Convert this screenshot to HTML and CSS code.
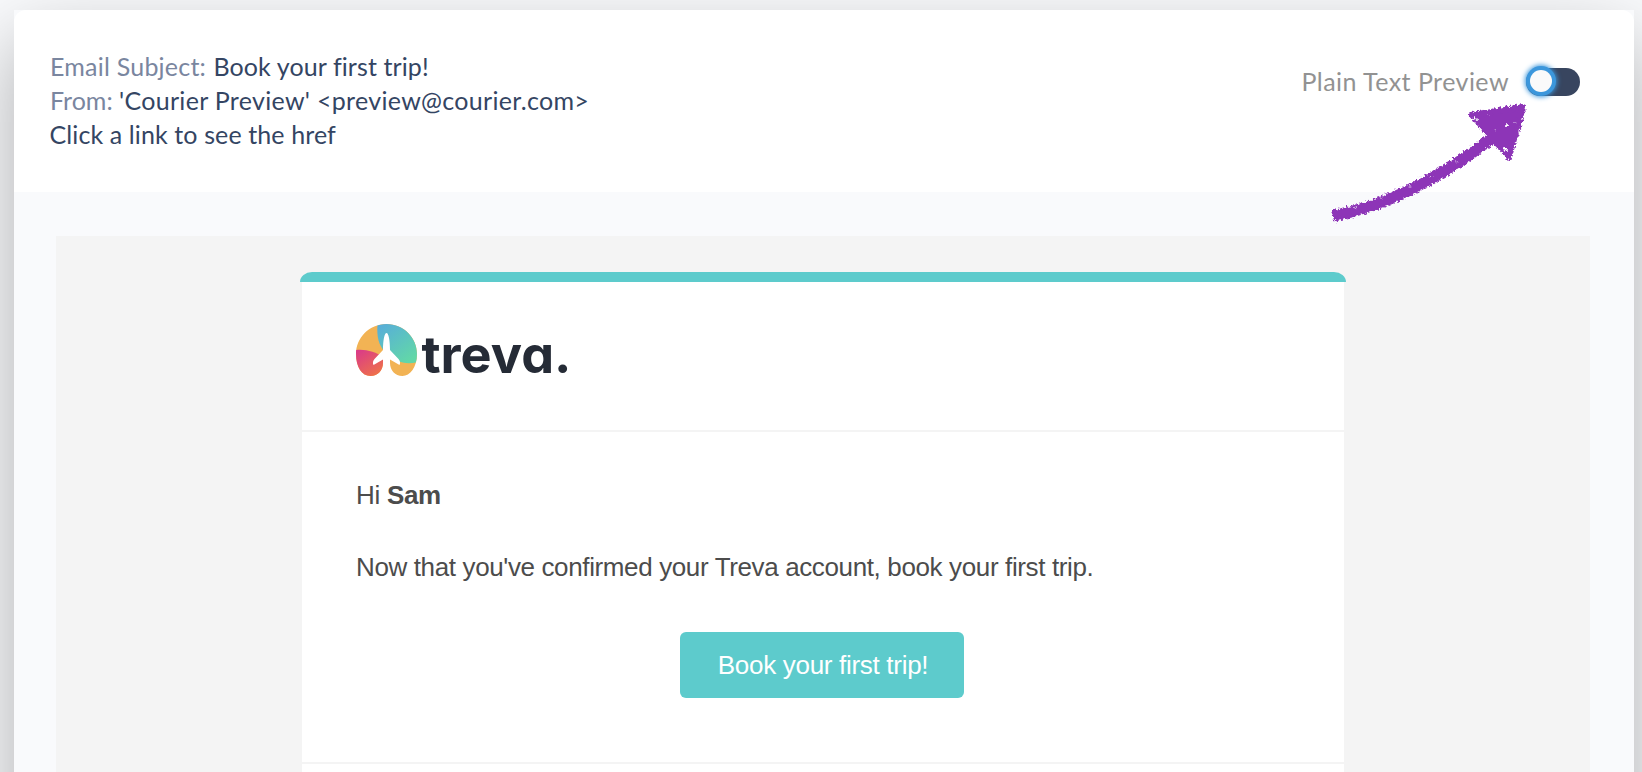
FILE: index.html
```html
<!DOCTYPE html>
<html lang="en">
<head>
<meta charset="utf-8">
<title>Email Preview</title>
<link rel="stylesheet" href="styles.css">
</head>
<body>
<main class="preview">
  <header class="preview-header">
    <div class="meta">
      <div><span class="label subject-label">Email Subject:</span> <span class="subject">Book your first trip!</span></div>
      <div><span class="label">From:</span> <span class="sender">'Courier Preview' &lt;preview@courier.com&gt;</span></div>
      <div class="hint">Click a link to see the href</div>
    </div>
    <div class="toggle">
      <span class="toggle-label">Plain Text Preview</span>
      <span class="track"><span class="thumb"></span></span>
    </div>
    <svg class="arrow" viewBox="0 0 220 150" width="220" height="150">
      <defs>
        <filter id="chalk" x="0" y="0" width="220" height="150" filterUnits="userSpaceOnUse">
          <feTurbulence type="fractalNoise" baseFrequency="0.42" numOctaves="3" seed="8" result="n"/>
          <feDisplacementMap in="SourceGraphic" in2="n" scale="6" xChannelSelector="R" yChannelSelector="G"/>
        </filter>
      </defs>
      <g filter="url(#chalk)">
        <path class="arrow-shaft" d="M13 126C62 117 116 91 171 49"/>
        <path class="arrow-head" d="M152 25 203 17 189 67Z"/>
        <path class="arrow-gap" d="M154 28l3 2M187 35l1 1M184 59l3 1"/>
        <path class="arrow-grain" d="M34 118l2-1M60 108l2 0M89 97l1 0M111 87l1-1M136 72l1 0M175 40l1 0M194 32l1 0M168 24l1 1"/>
      </g>
    </svg>
  </header>
  <div class="canvas">
    <article class="email">
      <div class="accent"></div>
      <div class="sheet">
        <div class="brand">
          <svg viewBox="0 0 220 80" width="220" height="80" role="img" aria-label="treva.">
            <defs>
              <linearGradient id="sea" x1="0" y1="0" x2=".7" y2="1"><stop offset="0" stop-color="#56a9df"/><stop offset="1" stop-color="#62d7a8"/></linearGradient>
              <linearGradient id="sun" x1="0" y1="0" x2=".6" y2="1"><stop offset="0" stop-color="#d9388b"/><stop offset="1" stop-color="#ef7348"/></linearGradient>
              <clipPath id="blob"><path d="M30.5 4C13 4 0 18 0 34C0 47 6 56 14.500 56C22 56 27 50 27 43L27 30H34V43C34 50 39 56 46.500 56C54 56 61 47 61 34C61 18 48 4 30.500 4Z"/></clipPath>
            </defs>
            <g clip-path="url(#blob)">
              <path fill="#f2b354" d="M0 0H62V60H0Z"/>
              <path fill="url(#sea)" d="M22 0C20 15 22 26 31 34C40 42 49 45 62 42V0Z"/>
              <path fill="url(#sun)" d="M0 30C10 29 20 32 27 37V60H0Z"/>
            </g>
            <path fill="#fff" d="M30.500 13C28.500 13 27 20 27 30L18.500 39Q16 42 17.500 45L27 39.500V59H34V39.500L43.500 45Q45 42 42.500 39L34 30C34 20 32.500 13 30.500 13Z"/>
            <text class="wordmark" x="65.500" y="53" textLength="150" lengthAdjust="spacingAndGlyphs">treva.</text>
          </svg>
        </div>
        <div class="content">
          <p class="greeting">Hi <strong>Sam</strong></p>
          <p class="message">Now that you've confirmed your Treva account, book your first trip.</p>
          <a class="button"><span>Book your first trip!</span></a>
        </div>
        <div class="footer"></div>
      </div>
    </article>
  </div>
</main>
</body>
</html>
```
FILE: styles.css
```css
* { box-sizing: border-box; }
body {
  margin: 0;
  padding: 10px 8px 0 14px;
  height: 772px;
  overflow: hidden;
  background: #f9fafc;
  font-family: Lato, "Liberation Sans", sans-serif;
}
.preview {
  height: 1100px;
  background: #f9fafc;
  box-shadow: 0 30px 72px rgba(0, 0, 0, .3);
}
.preview-header {
  position: relative;
  display: flex;
  justify-content: space-between;
  height: 182px;
  padding: 39px 54px 0 36px;
  border-radius: 12px 12px 0 0;
  background: #fff;
}
.meta { font-size: 25px; line-height: 34px; color: #344563; white-space: nowrap; }
.label { color: #7a869f; }
.subject-label { margin-right: 1px; letter-spacing: .22px; }
.subject { letter-spacing: .1px; }
.sender { letter-spacing: .31px; }
.hint { margin-left: -.5px; letter-spacing: .11px; }
.toggle { display: flex; align-items: center; height: 28px; margin-top: 19px; }
.toggle-label { position: relative; top: -1.5px; margin-right: 17px; font-size: 25px; letter-spacing: .46px; color: #929292; white-space: nowrap; }
.track { width: 54px; height: 28px; padding: 2px 4px; border-radius: 14px; background: #38455f; }
.thumb {
  display: block;
  width: 22px;
  height: 22px;
  border-radius: 50%;
  background: #fafafa;
  box-shadow: 0 0 5px 5px #3c97dc, 0 0 0 4px #3c97dc;
}
.arrow { position: absolute; left: 1306px; top: 80px; z-index: 2; }
.arrow-shaft { fill: none; stroke: #8d35b7; stroke-width: 11.5; }
.arrow-head { fill: #8d35b7; stroke: #8d35b7; stroke-width: 6; stroke-linejoin: round; }
.arrow-gap { fill: none; stroke: #fff; stroke-width: 2; stroke-linecap: round; }
.arrow-grain { fill: none; stroke: #f3e9f8; stroke-width: .8; stroke-linecap: round; }
.canvas { height: 900px; margin: 44px 44px 0 42px; padding: 36px 244px 0; background: #f4f4f4; }
.email { font: 26px/36px "Liberation Sans", sans-serif; color: #4c4c4c; }
.accent { height: 10px; border-radius: 12px 12px 0 0 / 10px 10px 0 0; background: #5dcbcc; }
.sheet { margin: 0 2px; background: #fff; }
.brand { height: 150px; padding: 38px 54px 0; border-bottom: 2px solid #f4f4f4; }
.brand svg { display: block; overflow: visible; }
.wordmark {
  font: 700 51px Inter, "Liberation Sans", sans-serif;
  font-feature-settings: "cv11" 1;
  fill: #252b36;
}
.content { height: 332px; padding: 45px 54px 0; border-bottom: 2px solid #f4f4f4; }
.content p { margin: 0 0 36px; white-space: nowrap; }
.greeting { letter-spacing: -.3px; }
.message { letter-spacing: -.37px; }
.button {
  display: flex;
  align-items: center;
  justify-content: center;
  width: 284px;
  height: 66px;
  margin: 47px 0 0 324px;
  padding-left: 2px;
  border-radius: 6px;
  background: #5dcbcc;
  color: #fff;
  letter-spacing: -.3px;
}
.footer { height: 300px; }
```
